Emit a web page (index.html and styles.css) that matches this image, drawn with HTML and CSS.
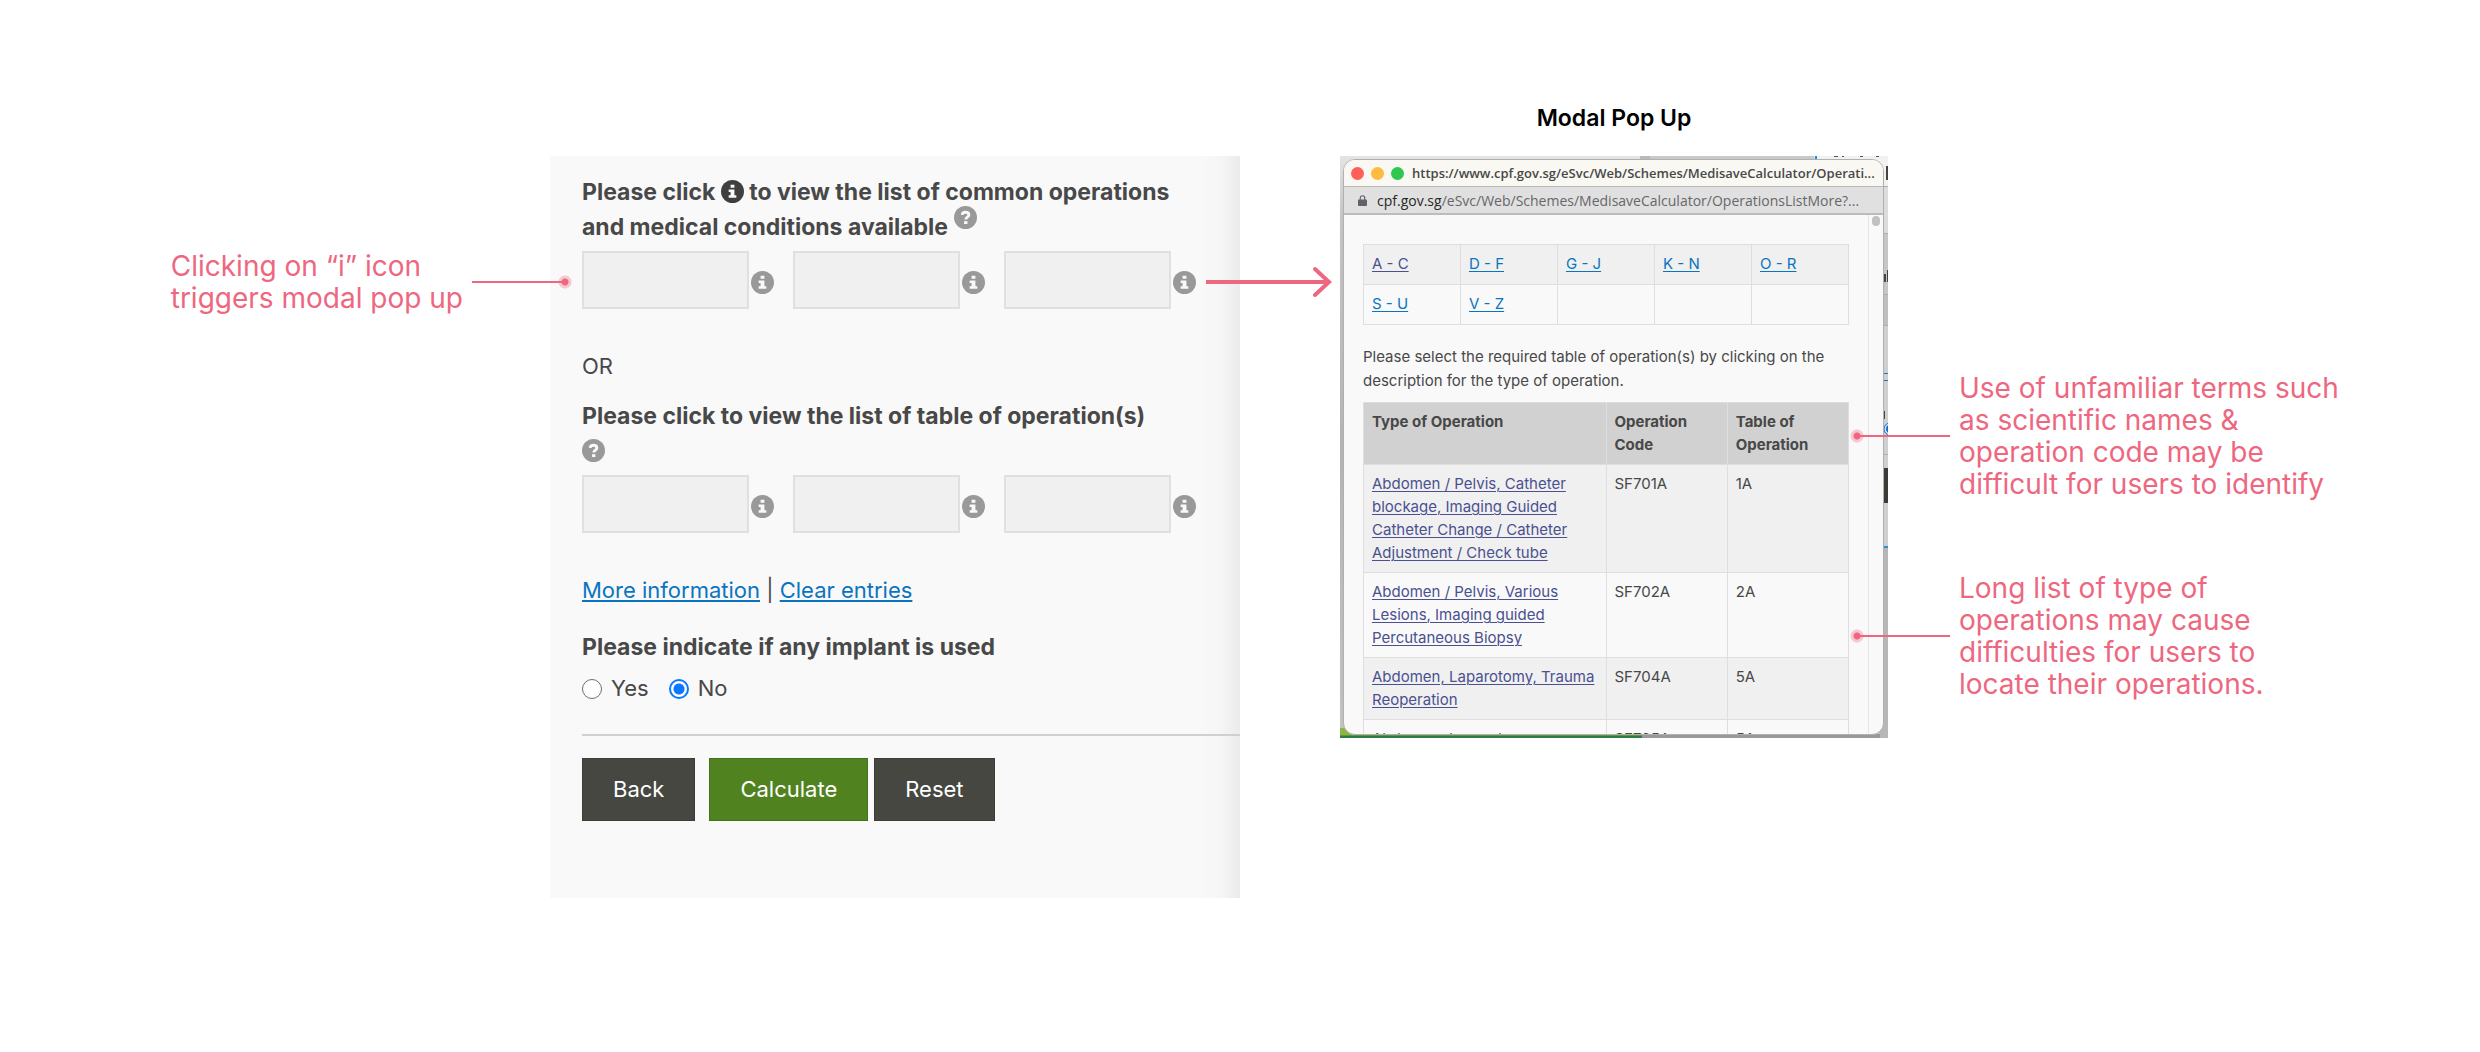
FILE: index.html
```html
<!DOCTYPE html>
<html lang="en">
<head>
<meta charset="utf-8">
<meta name="viewport" content="width=device-width, initial-scale=1">
<title>Medisave calculator: operation lookup</title>
<link rel="stylesheet" href="styles.css">
</head>
<body>
<svg class="sprite" aria-hidden="true">
  <symbol id="info" viewBox="0 0 24 24">
    <circle cx="12" cy="12" r="12"/>
    <path fill="#f9f9f9" d="M10 5h4v3h-4zM8 10h6v6h2v2.500H8V16h2v-3.500H8z"/>
  </symbol>
  <symbol id="help" viewBox="0 0 24 24">
    <circle cx="12" cy="12" r="12"/>
    <path fill="none" stroke="#f9f9f9" stroke-width="3" d="M8.500 9.300C8.700 7.300 10 6.500 12 6.500c2.200 0 3.500 1.100 3.500 2.800 0 2.400-3.200 2.300-3.200 4.900"/>
    <path fill="#f9f9f9" d="M10.500 15.800h3.500v3h-3.500z"/>
  </symbol>
</svg>

<main class="board">
  <h2 class="board-title">Modal Pop Up</h2>

  <aside class="note note-left">
    <p>Clicking on “i” icon<br>triggers modal pop up</p>
    <span class="lead lead-end"></span>
  </aside>

  <form class="calculator">
    <h3 class="question">Please click <svg class="icon icon-dark"><use href="#info"/></svg> to view the list of common operations<br>and medical conditions available <svg class="icon icon-super"><use href="#help"/></svg></h3>
    <div class="codes">
      <div class="code"><input type="text" aria-label="Condition 1"><button type="button" class="icon-button" aria-label="List 1"><svg class="icon"><use href="#info"/></svg></button></div>
      <div class="code"><input type="text" aria-label="Condition 2"><button type="button" class="icon-button" aria-label="List 2"><svg class="icon"><use href="#info"/></svg></button></div>
      <div class="code"><input type="text" aria-label="Condition 3"><button type="button" class="icon-button" aria-label="List 3"><svg class="icon"><use href="#info"/></svg></button></div>
    </div>
    <p class="or">OR</p>
    <h3 class="question">Please click to view the list of table of operation(s)<br><svg class="icon"><use href="#help"/></svg></h3>
    <div class="codes">
      <div class="code"><input type="text" aria-label="Operation 1"><button type="button" class="icon-button" aria-label="Table 1"><svg class="icon"><use href="#info"/></svg></button></div>
      <div class="code"><input type="text" aria-label="Operation 2"><button type="button" class="icon-button" aria-label="Table 2"><svg class="icon"><use href="#info"/></svg></button></div>
      <div class="code"><input type="text" aria-label="Operation 3"><button type="button" class="icon-button" aria-label="Table 3"><svg class="icon"><use href="#info"/></svg></button></div>
    </div>
    <p class="links"><a href="#more">More information</a> | <a href="#clear">Clear entries</a></p>
    <fieldset class="implant">
      <legend>Please indicate if any implant is used</legend>
      <div class="choices">
        <label><input type="radio" name="implant" value="yes">Yes</label>
        <label><input type="radio" name="implant" value="no" checked>No</label>
      </div>
    </fieldset>
    <hr>
    <div class="actions">
      <button type="button" class="action action-back">Back</button>
      <button type="button" class="action action-main">Calculate</button>
      <button type="reset" class="action">Reset</button>
    </div>
  </form>

  <svg class="arrow" viewBox="0 0 128 32" aria-hidden="true">
    <path d="M0 16H122M109 3L123 16L109 29"/>
  </svg>

  <section class="desktop">
    <svg class="desktop-edge" viewBox="0 0 248 582" aria-hidden="true">
      <path fill="#b9b9b9" d="M0 0h10v4H0z"/>
      <path fill="#c9c9c9" d="M10 0h164v4H10z"/>
      <path fill="#1a8fe0" d="M175 0h2v4h-2z"/>
      <path fill="#f1f1f1" d="M177 0h71v30h-71z"/>
      <path fill="#dcdcdc" d="M240 30h8v48h-8z"/>
      <path fill="#c6c6c6" d="M240 78h8v60h-8z"/>
      <path fill="#bfbfbf" d="M240 138h8v32h-8z"/>
      <path fill="#cfcfcf" d="M240 170h8v220h-8z"/>
      <path fill="#b7b7b7" d="M240 390h8v192h-8z"/>
      <path fill="#b0b0b0" d="M240 30h8v1h-8zM240 77h8v1h-8zM240 138h8v1h-8zM240 169h8v1h-8zM240 298h8v1h-8z"/>
      <path fill="#555" d="M194 0h4v1h-4zM202 0h2v1h-2zM220 0h3v1h-3zM236 0h3v1h-3z"/>
      <path fill="#444" d="M246 10h2v14h-2zM244 118h2v8h-2zM247 114h1v12h-1zM244 263h1v-8h-1z"/>
      <path fill="#1a78c2" d="M244 217h4v1h-4zM244 224h4v1h-4z"/>
      <circle cx="250" cy="273" r="6" fill="#cfe3f8" stroke="#1668c9" stroke-width="1"/>
      <circle cx="250" cy="273" r="4" fill="#1668c9"/>
      <path fill="#3b3c37" d="M240 312h8v35h-8z"/>
      <path fill="#2a8fd8" d="M240 390h8v2h-8z"/>
    </svg>
    <div class="popup">
      <header class="titlebar">
        <span class="light light-close"></span><span class="light light-min"></span><span class="light light-max"></span>
        <span class="title">https://www.cpf.gov.sg/eSvc/Web/Schemes/MedisaveCalculator/Operati...</span>
      </header>
      <div class="address">
        <svg class="lock" viewBox="0 0 10 12" aria-hidden="true"><path fill="#5f6368" d="M1 5h8a1 1 0 0 1 1 1v5a1 1 0 0 1-1 1H1a1 1 0 0 1-1-1V6a1 1 0 0 1 1-1z"/><path fill="none" stroke="#5f6368" stroke-width="1.300" d="M2.500 5.500V3.200a2.500 2.500 0 0 1 5 0v2.300"/></svg>
        <span><b>cpf.gov.sg</b>/eSvc/Web/Schemes/MedisaveCalculator/OperationsListMore?...</span>
      </div>
      <div class="viewport">
        <div class="document">
          <table class="letters">
            <tr><td><a class="visited" href="#a">A - C</a></td><td><a href="#d">D - F</a></td><td><a href="#g">G - J</a></td><td><a href="#k">K - N</a></td><td><a href="#o">O - R</a></td></tr>
            <tr><td><a href="#s">S - U</a></td><td><a href="#v">V - Z</a></td><td></td><td></td><td></td></tr>
          </table>
          <p class="hint">Please select the required table of operation(s) by clicking on the<br>description for the type of operation.</p>
          <table class="operations">
            <thead>
              <tr><th class="type">Type of Operation</th><th>Operation Code</th><th>Table of Operation</th></tr>
            </thead>
            <tbody>
              <tr><td><a class="visited" href="#701">Abdomen / Pelvis, Catheter blockage, Imaging Guided Catheter Change / Catheter Adjustment / Check tube</a></td><td>SF701A</td><td>1A</td></tr>
              <tr><td><a class="visited" href="#702">Abdomen / Pelvis, Various Lesions, Imaging guided Percutaneous Biopsy</a></td><td>SF702A</td><td>2A</td></tr>
              <tr><td><a class="visited" href="#704">Abdomen, Laparotomy, Trauma Reoperation</a></td><td>SF704A</td><td>5A</td></tr>
              <tr><td><a class="visited" href="#705">Abdomen, Laparotomy</a></td><td>SF705A</td><td>5A</td></tr>
            </tbody>
          </table>
        </div>
        <div class="scrollbar"><span class="thumb"></span></div>
      </div>
    </div>
  </section>

  <div class="notes-right">
    <aside class="note">
      <span class="lead"></span>
      <p>Use of unfamiliar terms such<br>as scientific names &amp;<br>operation code may be<br>difficult for users to identify</p>
    </aside>
    <aside class="note">
      <span class="lead"></span>
      <p>Long list of type of<br>operations may cause<br>difficulties for users to<br>locate their operations.</p>
    </aside>
  </div>
</main>
</body>
</html>
```
FILE: styles.css
```css
:root {
  --pink: #ee6780;
  --text: #484848;
  --link: #0a74c0;
  --visited: #4a5090;
  --line: #dedede;
}

* { box-sizing: border-box; }

body {
  margin: 0;
  background: #fff;
  color: var(--text);
  font: 22px/35px Inter, "Liberation Sans", sans-serif;
}

h2, h3, p { margin: 0; }
a { color: var(--link); text-decoration-thickness: 2px; text-underline-offset: 2px; }
a.visited { color: var(--visited); }

.sprite { position: absolute; width: 0; height: 0; }

/* Board: left note, form, arrow, pop-up, right notes */
.board {
  display: grid;
  grid-template-columns: 550fr 690fr 100fr 548fr 592fr;
  align-items: start;
  padding: 100px 0;
}

.board-title {
  grid-column: 4;
  margin-bottom: 20px;
  color: #000;
  font-size: 23px;
  font-weight: 600;
  line-height: 36px;
  text-align: center;
}

.note-left, .calculator, .arrow, .desktop, .notes-right { grid-row: 2; }

/* Annotations */
.note {
  position: relative;
  z-index: 2;
  display: flex;
  align-items: center;
  gap: 9px;
  color: var(--pink);
  font-size: 28px;
  line-height: 32px;
  white-space: nowrap;
}

.note-left {
  grid-column: 1;
  justify-content: flex-end;
  margin: 94px -22px 0 0;
}

.notes-right {
  grid-column: 5;
  display: grid;
  gap: 72px;
  margin: 216px 0 0 -38px;
}

.lead {
  flex: none;
  width: 100px;
  height: 14px;
  background:
    radial-gradient(circle at 7px 7px, var(--pink) 3px, transparent 4px),
    linear-gradient(var(--pink), var(--pink)) 7px 6px / 93px 2px no-repeat,
    radial-gradient(circle at 7px 7px, #f6c9d2 6px, transparent 7px);
}

.lead-end { rotate: 180deg; }

.arrow {
  grid-column: 3;
  position: relative;
  z-index: 2;
  width: 128px;
  height: 32px;
  margin: 110px 0 0 -34px;
  fill: none;
  stroke: var(--pink);
  stroke-width: 4;
  stroke-linecap: round;
}

/* Calculator form */
.calculator {
  grid-column: 2;
  padding: 19px 0 77px 32px;
  background: linear-gradient(to left, #ebebeb, #f6f6f6 20px, #f9f9f9 40px) #f9f9f9;
}

.question, .implant legend {
  padding: 0;
  font-size: 23px;
  font-weight: 700;
  line-height: 35px;
}

.icon {
  width: 23px;
  height: 23px;
  fill: #999;
  vertical-align: -3px;
}

.icon-dark { fill: #3f3f3f; }
.icon-super { vertical-align: 6px; margin-top: -10px; }

.codes {
  display: grid;
  grid-template-columns: repeat(3, 192px);
  gap: 19px;
  margin-top: 6px;
}

.code { display: flex; align-items: center; gap: 2px; }

.code input {
  width: 167px;
  height: 58px;
  padding: 0 12px;
  border: 2px solid #e0e0e0;
  border-radius: 0;
  background: #f0f0f0;
  font: inherit;
}

.icon-button {
  display: flex;
  padding: 4px 0 0;
  border: 0;
  background: none;
}

.or { margin: 40px 0 15px; }
.links { margin: 40px 0 22px; }
.implant { margin: 0; padding: 0; border: 0; }
.choices { display: flex; gap: 20px; padding-top: 6px; }
.choices label { display: flex; align-items: center; gap: 9px; }

.choices input {
  appearance: none;
  width: 20px;
  height: 20px;
  margin: 0;
  border: 1px solid #6f6f6f;
  border-radius: 50%;
  background: #fff;
}

.choices input:checked {
  border: 2px solid #0a78ff;
  background: radial-gradient(circle, #0a78ff 5px, #fff 6px);
}

.calculator hr {
  height: 2px;
  margin: 28px 0 22px;
  border: 0;
  background: #d0d0d0;
}

.actions { display: flex; gap: 6px; }

.action {
  height: 63px;
  padding: 0 30px;
  border: 1px solid #3c3d38;
  background: #464741;
  color: #fff;
  font: inherit;
}

.action-back { margin-right: 8px; }
.action-main { border-color: #437317; background: #508320; }

/* Desktop slice behind the pop-up */
.desktop {
  grid-column: 4;
  position: relative;
  overflow: hidden;
  padding: 3px 4px 3px 3px;
  background:
    linear-gradient(#8db544 7px, #2f7a45 8px) left bottom / 302px 10px no-repeat,
    linear-gradient(#999, #999) left bottom / 100% 4px no-repeat,
    linear-gradient(#e4e4e4, #c4c4c4 60px, #b4b4b4 50%, #c2c2c2);
}

.desktop-edge { position: absolute; top: 0; right: 0; width: 248px; height: 582px; }

.popup {
  position: relative;
  overflow: hidden;
  border: 1px solid #b0b0b0;
  border-radius: 12px;
  background: #f9f9f9;
  font-size: 15px;
  line-height: 23px;
}

.titlebar, .address { font-family: "Open Sans", sans-serif; white-space: nowrap; }

.titlebar {
  display: flex;
  align-items: center;
  gap: 7px;
  height: 27px;
  padding-left: 7px;
  border-bottom: 1px solid #b8b8b8;
  background: #f9f8f3;
  font-size: 13px;
}

.light { flex: none; width: 13px; height: 13px; border-radius: 50%; }
.light-close { background: #ff5f57; }
.light-min { background: #febb40; }
.light-max { background: #2dc84d; }
.title { margin-left: 1px; font-weight: 600; }

.address {
  display: flex;
  align-items: center;
  gap: 10px;
  height: 28px;
  padding-left: 14px;
  border-bottom: 2px solid #bcbcbc;
  background: #e0e0e0;
  color: #66676a;
  font-size: 14px;
}

.address b { color: #26272a; font-weight: 400; }
.lock { width: 9px; height: 11px; }

.viewport { display: flex; height: 519px; overflow: hidden; }
.document { flex: 1; padding: 29px 19px 0; }
.document a { text-decoration-thickness: 1px; }

.scrollbar { width: 15px; padding: 1px 3px; border-left: 1px solid #e6e6e6; }
.thumb { display: block; width: 8px; height: 10px; border-radius: 4px; background: #c1c1c1; }

table { width: 100%; border-collapse: collapse; table-layout: fixed; }
td, th { padding: 7px 8px; border: 1px solid var(--line); text-align: left; vertical-align: top; }
td { padding-bottom: 8px; }
tbody tr:nth-child(odd) { background: #f0f0f0; }
th { padding-bottom: 8px; background: #d1d1d1; font-weight: 700; }

.letters td { height: 40px; }
.hint { margin: 20px 0 9px; line-height: 24px; white-space: nowrap; }
.type { width: 50%; }
```
